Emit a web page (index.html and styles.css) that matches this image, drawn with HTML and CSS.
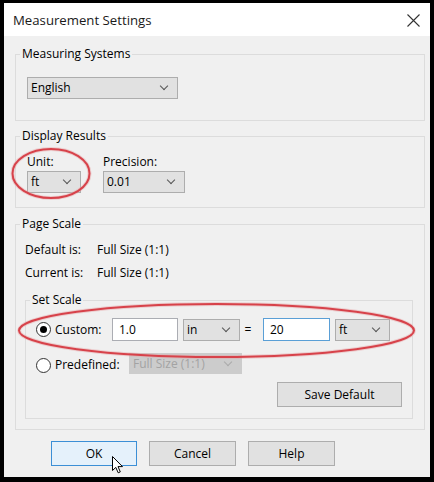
FILE: index.html
```html
<!DOCTYPE html>
<html>
<head>
<meta charset="utf-8">
<link rel="stylesheet" href="styles.css">
</head>
<body>
<div class="dialog">
  <div class="titlebar">
    <span class="title">Measurement Settings</span>
    <svg class="close" width="13" height="13" viewBox="0 0 13 13"><path d="M0.5 0.5 L12.5 12.5 M12.5 0.5 L0.5 12.5" stroke="#333" stroke-width="1.1" fill="none"/></svg>
  </div>
  <div class="content">
    <fieldset class="group g1">
      <legend>Measuring Systems</legend>
      <div class="inner i1">
        <div class="select w-english"><span>English</span><i class="chev"></i></div>
      </div>
    </fieldset>

    <fieldset class="group g2">
      <legend>Display Results</legend>
      <div class="inner i2">
        <div class="field">
          <div class="flabel">Unit:</div>
          <div class="select w-unit"><span>ft</span><i class="chev"></i></div>
        </div>
        <div class="field">
          <div class="flabel">Precision:</div>
          <div class="select w-prec"><span>0.01</span><i class="chev"></i></div>
        </div>
      </div>
    </fieldset>

    <fieldset class="group g3">
      <legend>Page Scale</legend>
      <div class="inner i3">
        <div class="info"><span class="ilabel">Default is:</span><span>Full Size (1:1)</span></div>
        <div class="info second"><span class="ilabel">Current is:</span><span>Full Size (1:1)</span></div>

        <fieldset class="group g4">
          <legend>Set Scale</legend>
          <div class="inner i4">
            <div class="row custom">
              <span class="radio checked"></span>
              <span class="rlabel rl-custom">Custom:</span>
              <div class="input w-in1">1.0</div>
              <div class="select w-in"><span>in</span><i class="chev"></i></div>
              <span class="eq">=</span>
              <div class="input focus w-in2">20</div>
              <div class="select w-ft"><span>ft</span><i class="chev"></i></div>
            </div>
            <div class="row predef">
              <span class="radio"></span>
              <span class="rlabel rl-pre">Predefined:</span>
              <div class="select disabled w-pre"><span>Full Size (1:1)</span><i class="chev"></i></div>
            </div>
            <div class="row saverow">
              <button class="btn save">Save Default</button>
            </div>
          </div>
        </fieldset>
      </div>
    </fieldset>

    <div class="buttons">
      <button class="btn ok">OK</button>
      <button class="btn">Cancel</button>
      <button class="btn">Help</button>
    </div>
  </div>
</div>

<svg class="marks" width="434" height="482" viewBox="0 0 434 482">
  <ellipse cx="51" cy="173.5" rx="38.5" ry="24.5" fill="none" stroke="#e6a3a6" stroke-width="4" opacity="0.45"/>
  <ellipse cx="51" cy="173.5" rx="38.5" ry="24.5" fill="none" stroke="#d7424a" stroke-width="2"/>
  <ellipse cx="216.5" cy="330.5" rx="197.5" ry="26.5" fill="none" stroke="#e6a3a6" stroke-width="4" opacity="0.45"/>
  <ellipse cx="216.5" cy="330.5" rx="197.5" ry="26.5" fill="none" stroke="#d7424a" stroke-width="2"/>
</svg>
<svg class="cursor" width="12" height="18" viewBox="0 0 12 18"><path d="M0.5 0.5 L0.5 14.5 L3.8 11.4 L6.2 16.8 L8.3 15.9 L6 10.6 L10.5 10.6 Z" fill="#fff" stroke="#000" stroke-width="1" stroke-linejoin="round"/></svg>
</body>
</html>
```

FILE: styles.css
```css
* { box-sizing: border-box; }
html, body { margin: 0; padding: 0; }
body {
  width: 434px;
  height: 482px;
  background: #000;
  overflow: hidden;
  position: relative;
  font-family: "Open Sans", "Noto Sans", sans-serif;
  font-size: 12px;
  color: #000;
}
.dialog {
  margin: 3px 0 0 4px;
  width: 426px;
  height: 474px;
  background: #f0f0f0;
  display: flex;
  flex-direction: column;
}
.titlebar {
  height: 33px;
  background: #fff;
  display: flex;
  align-items: center;
  justify-content: space-between;
  padding: 0 10px 0 9px;
  flex: none;
}
.title { font-size: 13.2px; color: #1a1a1a; }
.close { display: block; margin-top: 1px; }
.content {
  padding: 0 5px 0 11px;
  display: flex;
  flex-direction: column;
}
.group {
  margin: 0;
  padding: 0 0 0 4px;
  border: 1px solid #dcdcdc;
  min-width: 0;
}
.group legend {
  padding: 0 2px;
  line-height: 16px;
  height: 16px;
}
.g1 { margin-top: 10px; }
.g2 { margin-top: 7px; }
.g3 { margin-top: 8px; }
.i1 { padding: 15px 0 21px 7px; }
.i2 { padding: 10px 0 14px 7px; display: flex; gap: 22px; }
.i3 { padding: 10px 11px 10px 5px; }
.i4 { padding: 10px 10px 11px 6px; }
.g4 { margin: 11px 0 0 0; }

.select {
  height: 22px;
  background: #e1e1e1;
  border: 1px solid #adadad;
  display: flex;
  align-items: center;
  justify-content: space-between;
  padding: 0 10px 0 3px;
  line-height: 16px;
}
.chev {
  display: block;
  width: 6px;
  height: 6px;
  border-right: 1px solid #555;
  border-bottom: 1px solid #555;
  transform: rotate(45deg);
  margin-top: -4px;
}
.w-english { width: 151px; }
.w-unit { width: 54px; }
.w-prec { width: 82px; }
.w-in { width: 57px; }
.w-ft { width: 55px; }
.w-pre { width: 113px; height: 21px; }
.flabel { line-height: 16px; height: 16px; margin-bottom: 1px; }

.info { display: flex; line-height: 16px; height: 16px; }
.info.second { margin-top: 7px; }
.ilabel { width: 72px; }

.row { display: flex; align-items: center; }
.custom { height: 23px; }
.predef { margin-top: 12px; height: 21px; }
.saverow { margin-top: 8px; justify-content: flex-end; }
.radio {
  width: 15px;
  height: 15px;
  border: 1px solid #333;
  border-radius: 50%;
  background: #fff;
  display: flex;
  align-items: center;
  justify-content: center;
  flex: none;
  margin-right: 4px;
}
.radio.checked::after {
  content: "";
  width: 7px;
  height: 7px;
  border-radius: 50%;
  background: #000;
}
.predef .radio { margin-top: 3px; }
.rlabel { line-height: 16px; }
.rl-custom { width: 57px; }
.rl-pre { width: 74px; margin-top: 3px; }
.input {
  height: 23px;
  background: #fff;
  border: 1px solid #abadb3;
  padding: 0 6px;
  line-height: 21px;
}
.input.focus { border-color: #5a9fd6; }
.w-in1 { width: 66px; margin-right: 5px; }
.w-in2 { width: 67px; margin-right: 5px; }
.eq { width: 23px; text-align: center; padding-right: 7px; }
.select.disabled {
  background: #cccccc;
  border-color: #cccccc;
  color: #a3a3a3;
}
.select.disabled .chev { border-color: #aaa; }

.btn {
  font-family: inherit;
  font-size: 12px;
  color: #000;
  height: 25px;
  background: #e1e1e1;
  border: 1px solid #adadad;
  padding: 0;
  margin: 0;
}
.save { width: 125px; }
.buttons {
  margin-top: 11px;
  margin-left: 36px;
  display: flex;
  gap: 12px;
}
.buttons .btn { width: 87px; }
.buttons .ok { width: 86px; background: #e5f1fb; border-color: #3c8fd6; }

.marks { position: absolute; left: 0; top: 0; pointer-events: none; }
.cursor { position: absolute; left: 112px; top: 456px; }
```
